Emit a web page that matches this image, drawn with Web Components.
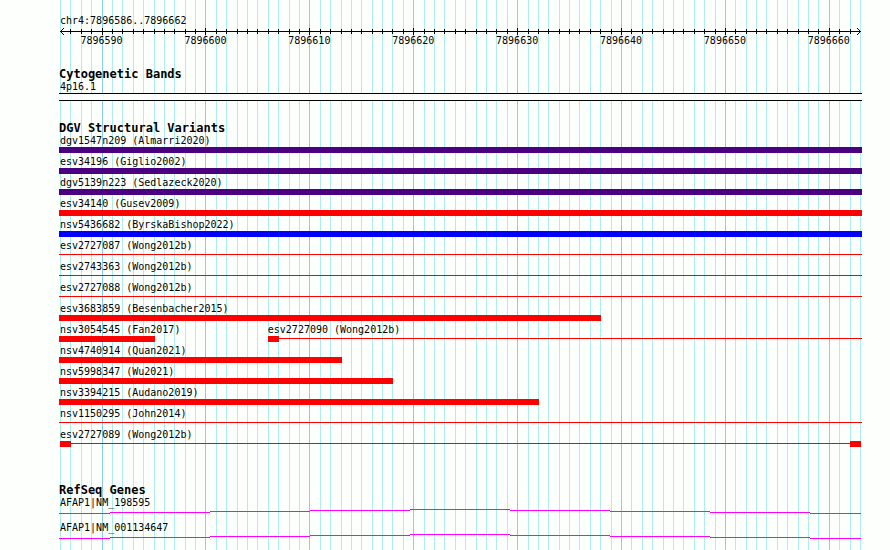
<!DOCTYPE html>
<html lang="en">
<head>
<meta charset="utf-8">
<title>chr4:7896586..7896662</title>
<style>
  body {
    margin: 0;
    background: #fdfffc;
    color: #000;
    font: 10px/12px "DejaVu Sans Mono", "Liberation Mono", monospace;
  }
</style>
</head>
<body>
<genome-browser>
  <genome-ruler label="chr4:7896586..7896662"></genome-ruler>

  <genome-track heading="Cytogenetic Bands">
    <cyto-band name="4p16.1"></cyto-band>
  </genome-track>

  <genome-track heading="DGV Structural Variants" class="variants">
    <feature-lane><variant-feature name="dgv1547n209 (Almarri2020)" from="586" to="663" blocks="586-663" clip="left right" colour="indigo"></variant-feature></feature-lane>
    <feature-lane><variant-feature name="esv34196 (Giglio2002)" from="586" to="663" blocks="586-663" clip="left right" colour="indigo"></variant-feature></feature-lane>
    <feature-lane><variant-feature name="dgv5139n223 (Sedlazeck2020)" from="586" to="663" blocks="586-663" clip="left right" colour="indigo"></variant-feature></feature-lane>
    <feature-lane><variant-feature name="esv34140 (Gusev2009)" from="586" to="663" blocks="586-663" clip="left right"></variant-feature></feature-lane>
    <feature-lane><variant-feature name="nsv5436682 (ByrskaBishop2022)" from="586" to="663" blocks="586-663" clip="left right" colour="blue"></variant-feature></feature-lane>
    <feature-lane><variant-feature name="esv2727087 (Wong2012b)" from="586" to="663" clip="left right"></variant-feature></feature-lane>
    <feature-lane><variant-feature name="esv2743363 (Wong2012b)" from="586" to="663" clip="left right"></variant-feature></feature-lane>
    <feature-lane><variant-feature name="esv2727088 (Wong2012b)" from="586" to="663" clip="left right"></variant-feature></feature-lane>
    <feature-lane><variant-feature name="esv3683859 (Besenbacher2015)" from="586" to="638" blocks="586-638" clip="left"></variant-feature></feature-lane>
    <feature-lane>
      <variant-feature name="nsv3054545 (Fan2017)" from="586" to="595" blocks="586-595" clip="left"></variant-feature>
      <variant-feature name="esv2727090 (Wong2012b)" from="606" to="663" blocks="606-607" clip="right"></variant-feature>
    </feature-lane>
    <feature-lane><variant-feature name="nsv4740914 (Quan2021)" from="586" to="613" blocks="586-613" clip="left"></variant-feature></feature-lane>
    <feature-lane><variant-feature name="nsv5998347 (Wu2021)" from="586" to="618" blocks="586-618" clip="left"></variant-feature></feature-lane>
    <feature-lane><variant-feature name="nsv3394215 (Audano2019)" from="586" to="632" blocks="586-632" clip="left"></variant-feature></feature-lane>
    <feature-lane><variant-feature name="nsv1150295 (John2014)" from="586" to="663" clip="left right"></variant-feature></feature-lane>
    <feature-lane><variant-feature name="esv2727089 (Wong2012b)" from="586" to="663" blocks="586-587 662-663"></variant-feature></feature-lane>
  </genome-track>

  <genome-track heading="RefSeq Genes" class="genes">
    <gene-intron name="AFAP1|NM_198595"></gene-intron>
    <gene-intron name="AFAP1|NM_001134647"></gene-intron>
  </genome-track>
</genome-browser>

<script>
// positions are given by their last three digits (7896xxx)
const FIRST = 586;
const BASES = 77;
const PREFIX = '7896';

class GenomeBrowser extends HTMLElement {
  constructor() {
    super();
    this.attachShadow({ mode: 'open' });
    let lines = '';
    for (let i = 0; i <= BASES; i++) {
      lines += `<i class="${(FIRST + i) % 10 === 0 ? 'major' : ''}"></i>`;
    }
    this.shadowRoot.innerHTML = `
      <style>
        :host {
          display: block;
          position: relative;
          box-sizing: border-box;
          min-height: 100vh;
          padding: 15px 30px 0 60px;
          overflow: hidden;
        }
        .grid {
          position: absolute;
          inset: 0 30px 0 60px;
          display: grid;
          grid-template-columns: repeat(${BASES}, minmax(0, 1fr)) 0;
        }
        i {
          width: 1px;
          background: #afeeee;
        }
        .major {
          background: #87ceeb;
        }
        .content {
          position: relative;
          display: flex;
          flex-direction: column;
          gap: 20px;
        }
        ::slotted(.variants) {
          --laneGap: 3px;
          padding-bottom: 16px;
        }
        ::slotted(.genes) {
          --laneGap: 8px;
        }
      </style>
      <div class="grid">${lines}</div>
      <div class="content"><slot></slot></div>
    `;
  }
}

class GenomeRuler extends HTMLElement {
  constructor() {
    super();
    this.attachShadow({ mode: 'open' });
    let ticks = '';
    let labels = '';
    for (let i = 1; i < BASES; i++) {
      const major = (FIRST + i) % 10 === 0;
      ticks += `<i class="${major ? 'major' : ''}" style="grid-column:${i + 1}"></i>`;
      if (major) {
        labels += `<span style="grid-column:${i + 1}">${PREFIX}${FIRST + i}</span>`;
      }
    }
    this.shadowRoot.innerHTML = `
      <style>
        :host {
          display: block;
        }
        .axis {
          display: flex;
          align-items: center;
          height: 7px;
          margin: 1px -1px 0 0;
          background: linear-gradient(#000, #000) center / 100% 1px no-repeat;
        }
        svg {
          flex: none;
        }
        .head-left {
          margin-right: -4px;
        }
        .head-right {
          margin-left: -3px;
        }
        .ticks {
          flex: 1;
        }
        .ticks, .labels {
          display: grid;
          grid-template-columns: repeat(${BASES}, minmax(0, 1fr));
          align-items: center;
        }
        i {
          width: 1px;
          height: 5px;
          background: #000;
        }
        i.major {
          height: 7px;
        }
        span {
          display: flex;
          justify-content: center;
          width: 0;
        }
      </style>
      <div class="label"></div>
      <div class="axis">
        <svg class="head-left" width="4" height="7" shape-rendering="crispEdges"><path d="M0 3h1v1h-1zM1 2h1v3h-1zM2 1h1v1h-1zM2 5h1v1h-1zM3 0h1v1h-1zM3 6h1v1h-1z"/></svg>
        <div class="ticks">${ticks}</div>
        <svg class="head-right" width="4" height="7" shape-rendering="crispEdges"><path d="M3 3h1v1h-1zM2 2h1v3h-1zM1 1h1v1h-1zM1 5h1v1h-1zM0 0h1v1h-1zM0 6h1v1h-1z"/></svg>
      </div>
      <div class="labels">${labels}</div>
    `;
  }

  connectedCallback() {
    this.shadowRoot.querySelector('.label').textContent = this.getAttribute('label');
  }
}

class GenomeTrack extends HTMLElement {
  constructor() {
    super();
    this.attachShadow({ mode: 'open' });
    this.shadowRoot.innerHTML = `
      <style>
        :host {
          display: block;
        }
        h2 {
          margin: 0 0 0 -1px;
          font-size: 12px;
          line-height: 14px;
          font-weight: bold;
        }
        .lanes {
          display: flex;
          flex-direction: column;
          gap: var(--laneGap, 0);
        }
      </style>
      <h2></h2>
      <div class="lanes"><slot></slot></div>
    `;
  }

  connectedCallback() {
    this.shadowRoot.querySelector('h2').textContent = this.getAttribute('heading');
  }
}

class CytoBand extends HTMLElement {
  constructor() {
    super();
    this.attachShadow({ mode: 'open' });
    this.shadowRoot.innerHTML = `
      <style>
        :host {
          display: block;
        }
        .band {
          height: 6px;
          margin: 0 -2px 0 -1px;
          border: solid #000;
          border-width: 1px 0;
          background: #fdfffc;
        }
      </style>
      <div class="name"></div>
      <div class="band"></div>
    `;
  }

  connectedCallback() {
    this.shadowRoot.querySelector('.name').textContent = this.getAttribute('name');
  }
}

class FeatureLane extends HTMLElement {
  constructor() {
    super();
    this.attachShadow({ mode: 'open' });
    this.shadowRoot.innerHTML = `
      <style>
        :host {
          display: grid;
          grid-template-columns: repeat(${BASES}, minmax(0, 1fr));
        }
      </style>
      <slot></slot>
    `;
  }
}

class VariantFeature extends HTMLElement {
  constructor() {
    super();
    this.attachShadow({ mode: 'open' });
    this.shadowRoot.innerHTML = `
      <style>
        :host {
          display: block;
        }
        .name {
          white-space: nowrap;
        }
        .glyph {
          display: grid;
          height: 6px;
        }
        .line, .block {
          grid-row: 1;
          margin-right: -1px;
          background: var(--colour, red);
        }
        .line {
          grid-column: 1 / -1;
          height: 1px;
          margin-top: 2px;
        }
        .left {
          margin-left: -1px;
        }
        .right {
          margin-right: -2px;
        }
      </style>
      <div class="name"></div>
      <div class="glyph"></div>
    `;
    this.$name = this.shadowRoot.querySelector('.name');
    this.$glyph = this.shadowRoot.querySelector('.glyph');
  }

  connectedCallback() {
    const from = Number(this.getAttribute('from'));
    const to = Number(this.getAttribute('to'));
    const clip = this.getAttribute('clip') || '';
    this.style.gridColumn = `${from - FIRST + 1} / ${to - FIRST + 1}`;
    if (this.hasAttribute('colour')) {
      this.style.setProperty('--colour', this.getAttribute('colour'));
    }
    this.$name.textContent = this.getAttribute('name');
    this.$glyph.style.gridTemplateColumns = `repeat(${to - from}, minmax(0, 1fr))`;

    const line = document.createElement('div');
    line.className = `line ${clip}`;
    this.$glyph.append(line);

    (this.getAttribute('blocks') || '').split(' ').filter(Boolean).forEach(range => {
      const [start, end] = range.split('-').map(Number);
      const block = document.createElement('div');
      block.className = 'block';
      if (start === from && clip.includes('left')) block.classList.add('left');
      if (end === to && clip.includes('right')) block.classList.add('right');
      block.style.gridColumn = `${start - from + 1} / ${end - from + 1}`;
      this.$glyph.append(block);
    });
  }
}

class GeneIntron extends HTMLElement {
  constructor() {
    super();
    this.attachShadow({ mode: 'open' });
    this.shadowRoot.innerHTML = `
      <style>
        :host {
          display: block;
        }
        .glyph {
          display: flex;
          margin: 0 -1px;
        }
        svg {
          flex: 1;
          min-width: 0;
          height: 5px;
        }
      </style>
      <div class="name"></div>
      <div class="glyph">
        <svg viewBox="0 0 802 5" preserveAspectRatio="none" shape-rendering="crispEdges" fill="magenta">
          <path d="M0 4h51v1H0zM51 3h100v1H51zM151 2h100v1H151zM251 1h100v1H251zM351 0h100v1H351zM451 1h100v1H451zM551 2h100v1H551zM651 3h100v1H651zM751 4h51v1H751z"/>
        </svg>
      </div>
    `;
  }

  connectedCallback() {
    this.shadowRoot.querySelector('.name').textContent = this.getAttribute('name');
  }
}

window.customElements.define('genome-browser', GenomeBrowser);
window.customElements.define('genome-ruler', GenomeRuler);
window.customElements.define('genome-track', GenomeTrack);
window.customElements.define('cyto-band', CytoBand);
window.customElements.define('feature-lane', FeatureLane);
window.customElements.define('variant-feature', VariantFeature);
window.customElements.define('gene-intron', GeneIntron);
</script>
</body>
</html>
